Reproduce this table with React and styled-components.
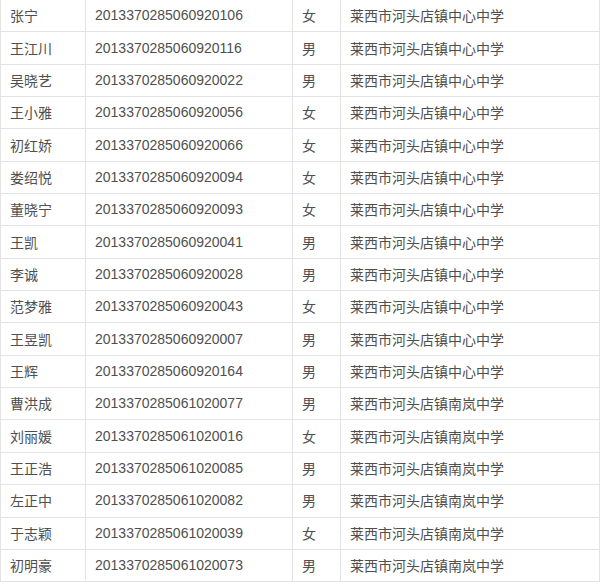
import React from "react";
import styled, { createGlobalStyle } from "styled-components";

const rows = [
  ["张宁", "2013370285060920106", "女", "莱西市河头店镇中心中学"],
  ["王江川", "2013370285060920116", "男", "莱西市河头店镇中心中学"],
  ["吴晓艺", "2013370285060920022", "男", "莱西市河头店镇中心中学"],
  ["王小雅", "2013370285060920056", "女", "莱西市河头店镇中心中学"],
  ["初红娇", "2013370285060920066", "女", "莱西市河头店镇中心中学"],
  ["娄绍悦", "2013370285060920094", "女", "莱西市河头店镇中心中学"],
  ["董晓宁", "2013370285060920093", "女", "莱西市河头店镇中心中学"],
  ["王凯", "2013370285060920041", "男", "莱西市河头店镇中心中学"],
  ["李诚", "2013370285060920028", "男", "莱西市河头店镇中心中学"],
  ["范梦雅", "2013370285060920043", "女", "莱西市河头店镇中心中学"],
  ["王昱凯", "2013370285060920007", "男", "莱西市河头店镇中心中学"],
  ["王辉", "2013370285060920164", "男", "莱西市河头店镇中心中学"],
  ["曹洪成", "2013370285061020077", "男", "莱西市河头店镇南岚中学"],
  ["刘丽媛", "2013370285061020016", "女", "莱西市河头店镇南岚中学"],
  ["王正浩", "2013370285061020085", "男", "莱西市河头店镇南岚中学"],
  ["左正中", "2013370285061020082", "男", "莱西市河头店镇南岚中学"],
  ["于志颖", "2013370285061020039", "女", "莱西市河头店镇南岚中学"],
  ["初明豪", "2013370285061020073", "男", "莱西市河头店镇南岚中学"],
];

export default function App() {
  return (
    <>
      <GlobalStyle />
      <Table>
        <colgroup>
          <col width="85" />
          <col width="207" />
          <col width="48" />
          <col width="259" />
        </colgroup>
        <tbody>
          {rows.map((r, i) => (
            <Row key={i}>
              <Cell>{r[0]}</Cell>
              <Cell>{r[1]}</Cell>
              <Cell>{r[2]}</Cell>
              <Cell>{r[3]}</Cell>
            </Row>
          ))}
        </tbody>
      </Table>
    </>
  );
}

const GlobalStyle = createGlobalStyle`
  body {
    margin: 0;
    background: #fff;
    overflow: hidden;
  }
`;
const Table = styled.table`
  width: 599px;
  table-layout: fixed;
  border-collapse: collapse;
  margin-top: -1px;
  font-family: "Liberation Sans", "Noto Sans CJK SC", sans-serif;
  font-size: 14px;
  color: #4f4f4f;
`;
const Row = styled.tr`
  height: 32.35px;
`;
const Cell = styled.td`
  border: 1px solid #e3e3e3;
  padding: 0 0 1px 9px;
  white-space: nowrap;
  vertical-align: middle;
`;
